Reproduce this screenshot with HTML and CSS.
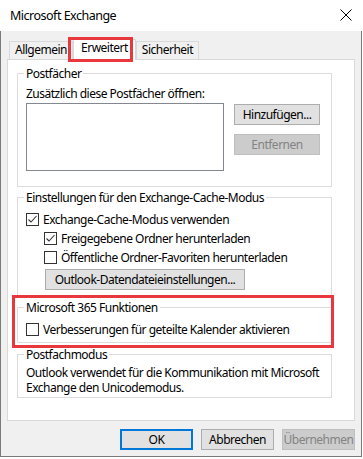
FILE: index.html
```html
<!DOCTYPE html>
<html lang="de">
<head>
<meta charset="utf-8">
<title>Microsoft Exchange</title>
<link rel="stylesheet" href="styles.css">
</head>
<body>
<div class="window">
  <div class="titlebar">
    <span class="title">Microsoft Exchange</span>
    <svg class="close" width="12" height="12" viewBox="0 0 12 12"><path d="M0.5 0.5 L11.5 11.5 M11.5 0.5 L0.5 11.5" stroke="#000" stroke-width="1" fill="none"/></svg>
  </div>
  <div class="frame">
    <div class="tabs">
      <div class="tab">Allgemein</div>
      <div class="tab active">Erweitert</div>
      <div class="tab">Sicherheit</div>
    </div>
    <div class="panel">
      <fieldset class="group g1">
        <legend>Postfächer</legend>
        <div class="label">Zusätzlich diese Postfächer öffnen:</div>
        <div class="mailrow">
          <div class="listbox"></div>
          <div class="btncol">
            <button class="btn btn-side">Hinzufügen...</button>
            <button class="btn btn-side disabled">Entfernen</button>
          </div>
        </div>
      </fieldset>
      <fieldset class="group g2">
        <legend>Einstellungen für den Exchange-Cache-Modus</legend>
        <label class="check"><span class="box checked"><svg width="11" height="11" viewBox="0 0 11 11"><path d="M1.5 5.5 L4 8 L9.5 2" stroke="#333" stroke-width="1.1" fill="none"/></svg></span>Exchange-Cache-Modus verwenden</label>
        <label class="check indent"><span class="box checked"><svg width="11" height="11" viewBox="0 0 11 11"><path d="M1.5 5.5 L4 8 L9.5 2" stroke="#333" stroke-width="1.1" fill="none"/></svg></span>Freigegebene Ordner herunterladen</label>
        <label class="check indent"><span class="box"></span>Öffentliche Ordner-Favoriten herunterladen</label>
        <button class="btn btn-data">Outlook-Datendateieinstellungen...</button>
      </fieldset>
      <fieldset class="group g3">
        <legend>Microsoft 365 Funktionen</legend>
        <label class="check"><span class="box"></span>Verbesserungen für geteilte Kalender aktivieren</label>
      </fieldset>
      <fieldset class="group g4">
        <legend>Postfachmodus</legend>
        <p class="info"><span class="line">Outlook verwendet für die Kommunikation mit Microsoft</span><span class="line">Exchange den Unicodemodus.</span></p>
      </fieldset>
      <div class="mark mark-group"></div>
    </div>
    <div class="footer">
      <button class="btn btn-foot default">OK</button>
      <button class="btn btn-foot">Abbrechen</button>
      <button class="btn btn-foot disabled">Übernehmen</button>
    </div>
    <div class="mark mark-tab"></div>
  </div>
</div>
</body>
</html>
```

FILE: styles.css
```css
* { box-sizing: border-box; }
html, body { margin: 0; padding: 0; background: #ffffff; }
body {
  font-family: "Noto Sans", "Open Sans", sans-serif;
  font-size: 12px;
  letter-spacing: -0.5px;
  color: #000;
}
.window { width: 363px; height: 459px; }
.titlebar {
  height: 31px;
  background: #fff;
  display: flex;
  align-items: center;
  justify-content: space-between;
  padding: 0 10px 0 10px;
}
.title { font-size: 12.5px; line-height: 20px; }
.close { margin-top: -1px; margin-right: 1px; }
.frame {
  position: relative;
  width: 362px;
  height: 426px;
  background: #f0f0f0;
  border: 1px solid #7a7a7a;
  border-top: none;
  padding: 8px 6px 6px 6px;
  display: flex;
  flex-direction: column;
}
.tabs {
  height: 20px;
  display: flex;
  align-items: flex-end;
  margin-left: 2px;
}
.tab {
  height: 18px;
  line-height: 16px;
  padding: 0 5px;
  border: 1px solid #d9d9d9;
  border-bottom: none;
  background: #f0f0f0;
  white-space: nowrap;
}
.tab.active {
  height: 21px;
  margin-bottom: -1px;
  background: #fff;
  line-height: 16px;
  padding: 0 7px;
  position: relative;
  z-index: 1;
}
.panel {
  position: relative;
  height: 362px;
  background: #fff;
  border: 1px solid #d9d9d9;
  padding: 6px 22px 0 9px;
}
.group {
  margin: 0;
  border: 1px solid #dcdcdc;
  padding: 0 8px;
  min-width: 0;
}
.group legend {
  padding: 0 2px;
  margin-left: -2px;
  line-height: 15px;
}
.g1 { padding-top: 5px; padding-bottom: 15px; }
.g2 { margin-top: 3px; padding-top: 5px; padding-bottom: 7px; }
.g3 { margin-top: 2px; padding-top: 5px; padding-bottom: 3px; }
.g4 { margin-top: 4px; padding-top: 3px; padding-bottom: 2px; }
.label { line-height: 15px; }
.mailrow { display: flex; align-items: flex-start; margin-top: 2px; gap: 10px; }
.listbox {
  width: 198px;
  height: 68px;
  border: 1px solid #828790;
  background: #fff;
}
.btncol { display: flex; flex-direction: column; gap: 9px; padding-top: 1px; }
.btn {
  font-family: inherit;
  font-size: 12px;
  letter-spacing: -0.5px;
  color: #000;
  background: #e1e1e1;
  border: 1px solid #adadad;
  padding: 0;
  height: 21px;
  line-height: 18px;
  margin: 0;
  white-space: nowrap;
}
.btn.disabled { background: #cccccc; border-color: #bfbfbf; color: #838383; }
.btn-side { width: 86px; }
.btn-data { width: 200px; margin: 2px 0 0 19px; display: block; }
.check {
  display: flex;
  align-items: center;
  height: 19px;
  line-height: 19px;
  white-space: nowrap;
}
.check.indent { margin-left: 18px; }
.box {
  width: 13px;
  height: 13px;
  border: 1px solid #333;
  background: #fff;
  margin-right: 4px;
  display: flex;
  flex: none;
}
.info { margin: 0; white-space: nowrap; display: flex; flex-direction: column; }
.info .line { display: block; height: 15px; line-height: 15px; }
.footer {
  margin-top: 8px;
  display: flex;
  justify-content: flex-end;
  gap: 8px;
}
.btn-foot { width: 73px; }
.btn.default { border: 2px solid #0078d7; }
.mark {
  position: absolute;
  border: 3px solid #e8383d;
  pointer-events: none;
  z-index: 5;
}
.mark-tab { left: 67px; top: 6px; width: 65px; height: 25px; }
.mark-group { left: 4px; top: 235px; width: 322px; height: 53px; }
```
